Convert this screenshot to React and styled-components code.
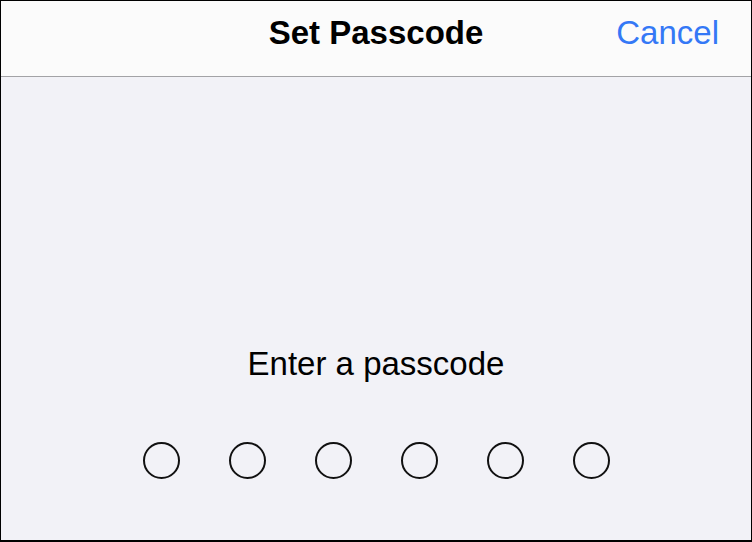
import React from "react";
import styled, { createGlobalStyle } from "styled-components";

const GlobalStyle = createGlobalStyle`
  html, body {
    margin: 0;
    padding: 0;
    background: #ffffff;
  }
  * {
    box-sizing: border-box;
  }
`;

const DOTS = 6;

const App = () => (
  <>
    <GlobalStyle />
    <Screen>
      <NavBar>
        <Side />
        <Title>Set Passcode</Title>
        <Side align="right">
          <CancelButton>Cancel</CancelButton>
        </Side>
      </NavBar>

      <Body>
        <Prompt>Enter a passcode</Prompt>
        <Dots>
          {Array.from({ length: DOTS }).map((_, i) => (
            <Dot key={i} />
          ))}
        </Dots>
      </Body>
    </Screen>
  </>
);

const Screen = styled.div`
  width: 752px;
  height: 542px;
  border: 1px solid #000000;
  border-bottom-width: 2px;
  display: flex;
  flex-direction: column;
  font-family: "Liberation Sans", Arial, sans-serif;
  color: #000000;
  overflow: hidden;
`;

const NavBar = styled.div`
  height: 76px;
  flex-shrink: 0;
  background: #fbfbfb;
  border-bottom: 1px solid #a3a3a6;
  display: grid;
  grid-template-columns: 1fr auto 1fr;
  align-items: start;
  padding: 13px 32px 0 32px;
`;

const Side = styled.div`
  display: flex;
  justify-content: ${({ align }) => (align === "right" ? "flex-end" : "flex-start")};
`;

const Title = styled.div`
  font-size: 33px;
  line-height: 38px;
  font-weight: bold;
`;

const CancelButton = styled.button`
  border: none;
  background: none;
  padding: 0;
  margin: 0;
  font-family: inherit;
  font-size: 33px;
  line-height: 38px;
  color: #3478f6;
  cursor: pointer;
`;

const Body = styled.div`
  flex: 1;
  background: #f2f2f7;
  display: flex;
  flex-direction: column;
  align-items: center;
  padding-top: 268px;
`;

const Prompt = styled.div`
  font-size: 33px;
  line-height: 38px;
`;

const Dots = styled.div`
  display: flex;
  gap: 49px;
  margin-top: 59px;
`;

const Dot = styled.div`
  width: 37px;
  height: 37px;
  border-radius: 50%;
  border: 2px solid #111111;
`;

export default App;
